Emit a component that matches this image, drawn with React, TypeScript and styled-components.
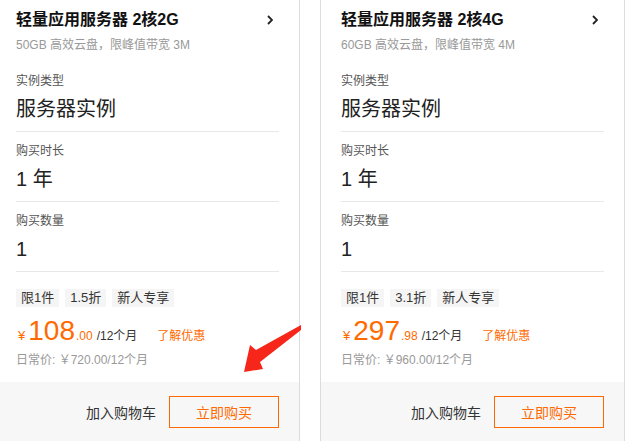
import styled, { createGlobalStyle } from 'styled-components';

const GlobalStyle = createGlobalStyle`
  html, body {
    margin: 0;
    padding: 0;
    background: #fff;
    overflow: hidden;
  }
  body {
    font-family: "Liberation Sans", "Noto Sans CJK SC", Arial, sans-serif;
    color: #333;
  }
`;

const Page = styled.div`
  position: relative;
  width: 636px;
  height: 441px;
  overflow: hidden;
`;

const CardRow = styled.div`
  display: flex;
  gap: 20px;
  margin-left: -5px;
  margin-top: -1px;
`;

const Card = styled.div`
  box-sizing: border-box;
  width: 305px;
  border: 1px solid #dcdcdc;
  display: flex;
  flex-direction: column;
  background: #fff;
`;

const CardBody = styled.div`
  padding: 8px 20px 13px;
`;

const TitleRow = styled.div`
  display: flex;
  align-items: center;
  justify-content: space-between;
  height: 24px;
`;

const Title = styled.h3`
  margin: 0;
  font-size: 16px;
  line-height: 24px;
  font-weight: bold;
  color: #111;
`;

const Chevron = styled.svg`
  margin-right: 6px;
  display: block;
`;

const Subtitle = styled.div`
  margin-top: 4px;
  font-size: 12px;
  line-height: 18px;
  color: #999;
`;

const Options = styled.div`
  margin-top: 8px;
`;

const Section = styled.div`
  padding: 10px 0 8px;
  border-bottom: 1px solid #e8e8e8;
`;

const Label = styled.div`
  font-size: 12px;
  line-height: 18px;
  color: #555;
`;

const Value = styled.div`
  margin-top: 5px;
  font-size: 20px;
  line-height: 28px;
  color: #222;
`;

const Tags = styled.div`
  display: flex;
  gap: 6px;
  margin-top: 17px;
`;

const Tag = styled.span`
  padding: 0 5px;
  font-size: 13px;
  line-height: 18px;
  background: #f5f5f5;
  color: #333;
`;

const PriceRow = styled.div`
  display: flex;
  align-items: baseline;
  height: 34px;
  margin-top: 7px;
  color: #ff6a00;
`;

const Currency = styled.span`
  font-size: 13px;
  line-height: 18px;
  margin: 0 3px 0 2px;
`;

const PriceInt = styled.span`
  font-size: 28px;
  line-height: 34px;
`;

const PriceDec = styled.span`
  font-size: 12px;
  line-height: 18px;
  margin-left: 1px;
`;

const Period = styled.span`
  font-size: 12px;
  line-height: 18px;
  color: #333;
  margin-left: 4px;
`;

const Promo = styled.a`
  font-size: 12px;
  line-height: 18px;
  color: #ff6a00;
  margin-left: 20px;
  text-decoration: none;
`;

const RegularPrice = styled.div`
  margin-top: 3px;
  font-size: 12px;
  line-height: 18px;
  color: #999;
`;

const Footer = styled.div`
  display: flex;
  justify-content: flex-end;
  align-items: center;
  gap: 13px;
  padding: 14px 20px 30px;
  background: #f7f7f7;
`;

const CartLink = styled.span`
  font-size: 14px;
  color: #333;
`;

const BuyButton = styled.button`
  box-sizing: border-box;
  width: 110px;
  height: 32px;
  border: 1px solid #ff6a00;
  background: transparent;
  color: #ff6a00;
  font-family: inherit;
  font-size: 14px;
  padding: 0;
`;

const Arrow = styled.svg`
  position: absolute;
  left: 240px;
  top: 320px;
  pointer-events: none;
`;

interface Plan {
  title: string;
  spec: string;
  discount: string;
  priceInt: string;
  priceDec: string;
  regular: string;
}

const plans: Plan[] = [
  {
    title: '轻量应用服务器 2核2G',
    spec: '50GB 高效云盘，限峰值带宽 3M',
    discount: '1.5折',
    priceInt: '108',
    priceDec: '.00',
    regular: '日常价: ￥720.00/12个月',
  },
  {
    title: '轻量应用服务器 2核4G',
    spec: '60GB 高效云盘，限峰值带宽 4M',
    discount: '3.1折',
    priceInt: '297',
    priceDec: '.98',
    regular: '日常价: ￥960.00/12个月',
  },
];

const PlanCard = ({ plan }: { plan: Plan }) => (
  <Card>
    <CardBody>
      <TitleRow>
        <Title>{plan.title}</Title>
        <Chevron width="6" height="10" viewBox="0 0 6 10">
          <polyline points="1,1 5,5 1,9" fill="none" stroke="#222" strokeWidth="1.8" />
        </Chevron>
      </TitleRow>
      <Subtitle>{plan.spec}</Subtitle>
      <Options>
        <Section>
          <Label>实例类型</Label>
          <Value>服务器实例</Value>
        </Section>
        <Section>
          <Label>购买时长</Label>
          <Value>1 年</Value>
        </Section>
        <Section>
          <Label>购买数量</Label>
          <Value>1</Value>
        </Section>
      </Options>
      <Tags>
        <Tag>限1件</Tag>
        <Tag>{plan.discount}</Tag>
        <Tag>新人专享</Tag>
      </Tags>
      <PriceRow>
        <Currency>¥</Currency>
        <PriceInt>{plan.priceInt}</PriceInt>
        <PriceDec>{plan.priceDec}</PriceDec>
        <Period>/12个月</Period>
        <Promo href="#">了解优惠</Promo>
      </PriceRow>
      <RegularPrice>{plan.regular}</RegularPrice>
    </CardBody>
    <Footer>
      <CartLink>加入购物车</CartLink>
      <BuyButton>立即购买</BuyButton>
    </Footer>
  </Card>
);

const App = () => (
  <Page>
    <GlobalStyle />
    <CardRow>
      {plans.map((plan) => (
        <PlanCard key={plan.title} plan={plan} />
      ))}
    </CardRow>
    <Arrow width="64" height="56" viewBox="0 0 64 56">
      <polygon
        points="61,5 16,30 10,25 4,52 23,49 20,42 61,10"
        fill="#f7261b"
      />
    </Arrow>
  </Page>
);

export default App;
